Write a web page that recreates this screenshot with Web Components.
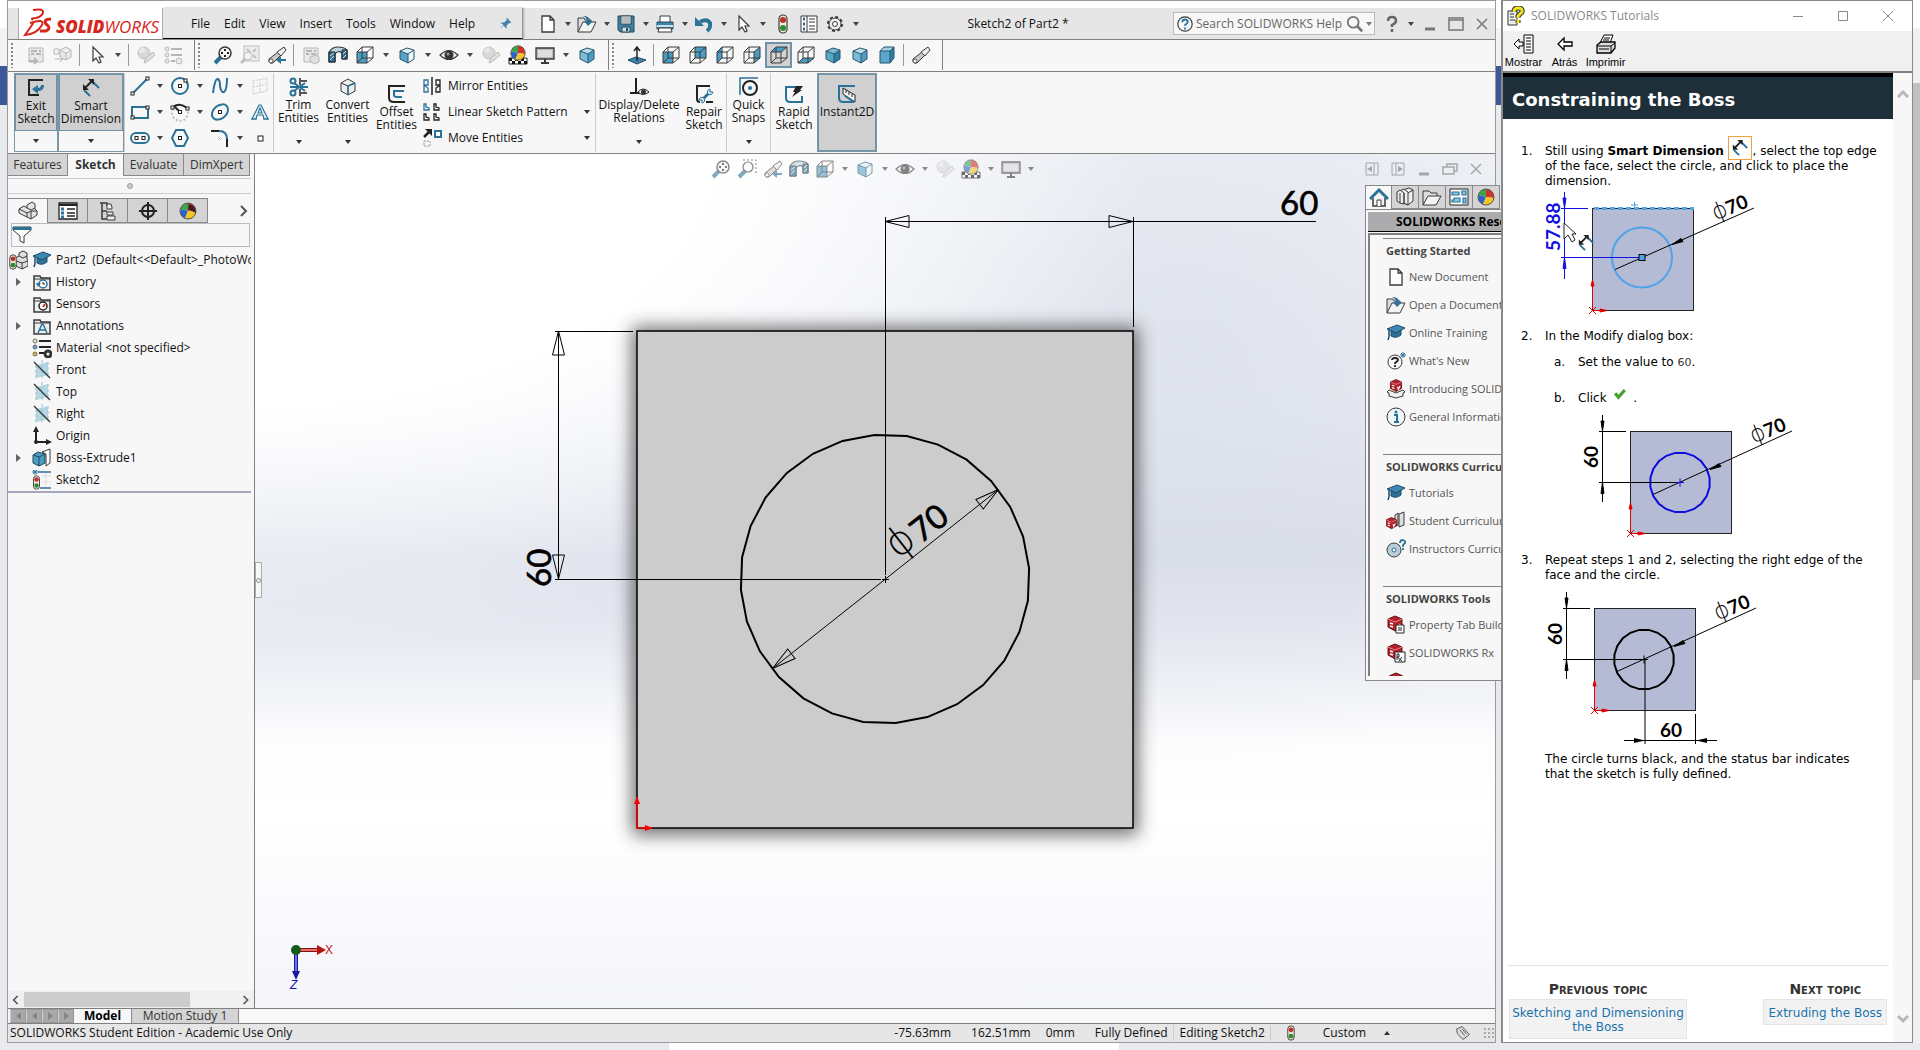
<!DOCTYPE html>
<html lang="en">
<head>
<meta charset="UTF-8">
<title>Sketch2 of Part2 *</title>
<style>
  html, body { height: 100%; }
  body {
    margin: 0;
    overflow: hidden;
    font: 12px/16px "Open Sans", "Noto Sans", sans-serif;
    color: #111;
  }
</style>
</head>
<body>
<cad-desktop>
  <cad-window slot="app"></cad-window>
  <help-window slot="help"></help-window>
</cad-desktop>

<script>
// ---------- icons (20 x 20 grid) ----------
const K = '#3a3a3a';
const B = '#2b7299';

const wire = (faces) => `${faces}<path d="M2 7H12V18H2ZM7 2H18V13H7ZM2 7L7 2M12 7L18 2M12 18L18 13M2 18L7 13" fill="none" stroke="${K}"/>`;
const solid = (a, b, c) => `<path d="M3 6L10 3L17 5L11 9Z" fill="${a}"/><path d="M3 6L11 9V18L3 14Z" fill="${b}"/><path d="M11 9L17 5V14L11 18Z" fill="${c}"/><path d="M3 6L10 3L17 5V14L11 18L3 14ZM3 6L11 9V18M11 9L17 5" fill="none" stroke="#27546c"/>`;
const ball = `<circle cx="10" cy="10" r="8" fill="#fff"/><path d="M10 10V2A8 8 0 0 0 2.5 8Z" fill="#3aa648"/><path d="M10 10V2A8 8 0 0 1 17.5 8L18 11Z" fill="#d22f2f"/><path d="M10 10L2.5 8A8 8 0 0 0 7 17.5Z" fill="#2f62c8"/><path d="M10 10L7 17.5A8 8 0 0 0 18 11Z" fill="#f2c522"/><circle cx="10" cy="10" r="8" fill="none" stroke="#555"/>`;
const folder = `<path d="M2 18V4H8L9 6H18V18Z" fill="#eee" stroke="${K}" stroke-width="1.5"/><path d="M2 7H18" stroke="${K}"/>`;
const plane = `<path d="M4 5L16 2V15L4 18Z" fill="#b5d6e3"/><path d="M10 0V20M4 5V18M16 2V15" stroke="#9cbccb" stroke-dasharray="3 2"/><path d="M2 2L18 18" stroke="${K}" stroke-width="1.5"/>`;
const light = `<rect x="6" y="1" width="8" height="18" rx="4" fill="#f3ecdd" stroke="${K}" stroke-width="1.2"/><circle cx="10" cy="6" r="3" fill="#c0302b"/><circle cx="10" cy="14" r="3" fill="#2f8a36"/>`;
const cap = `<path d="M1 6L11 2L19 5L10 10Z" fill="#3d88b0" stroke="#1f4f6b"/><path d="M5 8V13Q10 16 15 12V7L10 10Z" fill="#2f7298" stroke="#1f4f6b"/><path d="M3 7V14L2 17" fill="none" stroke="#1f4f6b" stroke-width="1.5"/>`;
const smart = `<path d="M3 12L9 18M12 4L18 10" stroke="${B}" stroke-width="2"/><path d="M4 10L11 3" stroke="#222" stroke-width="2"/><path d="M2 12V6L8 12ZM13 1V7L7 1Z" fill="#222"/>`;
const swBox = `<path d="M3 5L10 2L17 5V13L10 17L3 13Z" fill="#b3202a" stroke="#5e1016"/><path d="M3 5L10 8L17 5" fill="none" stroke="#e8888d"/><path d="M5 9L8 10M5 12L8 13M12 11L13 14L15 10" stroke="#fff" stroke-width="1.5" fill="none"/>`;
const pencilBall = `<circle cx="8" cy="8" r="6" fill="#bbb" stroke="#888"/><path d="M3 8A6 6 0 0 1 8 2L9 7Z" fill="#ddd"/><path d="M8 18L10 13L17 7L19 10L12 16Z" fill="#ccc" stroke="#777"/>`;
const tube = `<path d="M2 14L11 7L14 10L6 18Q1 19 2 14Z" fill="#c9c7bf" stroke="${K}"/><path d="M10 7L17 2L19 5L14 11Z" fill="#eee" stroke="${K}"/><ellipse cx="4" cy="16" rx="2" ry="2" fill="#fff" stroke="#555"/>`;
const handle = `<path d="M9 11L2 18" stroke="${B}" stroke-width="4"/>`;
const docGrid = `<path d="M3 3H17V17H3Z" fill="#ddd" stroke="#777"/><path d="M5 6H11M5 9H8M13 6H15M10 9H15" stroke="#777" stroke-width="2"/>`;
const nodes = (pts) => pts.map(([x, y]) => `<rect x="${x - 1.5}" y="${y - 1.5}" width="3" height="3" fill="#fff" stroke="#222"/>`).join('');

const ICONS = {
  pin: `<path d="M12 2L18 8L15 9L12 12L12 16L8 12L3 17L8 11L4 8L9 8L12 5Z" fill="#3d85ad"/>`,
  newDoc: `<path d="M4 2H12L16 6V18H4ZM12 2V6H16" fill="#fff" stroke="${K}" stroke-width="1.3"/>`,
  open: `<path d="M1 18V4H7L8 6H14V9" fill="#ddd" stroke="${K}"/><path d="M1 18L6 8H19L14 18Z" fill="#f3f3f3" stroke="${K}"/><path d="M6 2Q13 2 13 7H16L11 12L7 7H10Q10 4 6 2Z" fill="${B}"/>`,
  save: `<path d="M2 2H18V18H4L2 16Z" fill="#3f81a5" stroke="#24485c"/><path d="M5 2H15V10H5Z" fill="#fff" stroke="#24485c"/><path d="M6 4H14M6 6H14M6 8H14" stroke="#777"/><path d="M6 13H14V18H6Z" fill="#cfdde5" stroke="#24485c"/><path d="M11 14V17" stroke="#24485c" stroke-width="2"/>`,
  print: `<path d="M5 8V2H15V8" fill="#fff" stroke="${K}"/><path d="M2 8H18V15H2Z" fill="#3d85ad" stroke="#24485c"/><path d="M2 12H18" stroke="#cfe3ee" stroke-width="2"/><path d="M4 14H16L17 18H3Z" fill="#fff" stroke="${K}"/>`,
  undo: `<path d="M6 8Q13 4 16 9Q17 14 13 17" fill="none" stroke="${B}" stroke-width="4"/><path d="M1 3V12H10Z" fill="${B}"/>`,
  cursor: `<path d="M6 2V16L9 13L12 18L14 17L12 12H16Z" fill="#fff" stroke="${K}" stroke-width="1.2"/>`,
  light,
  options: `<path d="M2 2H18V18H2ZM8 2V18" fill="#fff" stroke="${K}"/><path d="M4 5H6M4 10H6M4 15H6" stroke="${B}" stroke-width="3"/><path d="M10 5H16M10 8H16M10 12H16M10 15H16" stroke="${K}"/>`,
  gear: `<circle cx="10" cy="10" r="7" fill="none" stroke="${K}" stroke-width="2" stroke-dasharray="3 2.5"/><circle cx="10" cy="10" r="6" fill="#eee" stroke="${K}"/><circle cx="10" cy="10" r="2.5" fill="#fff" stroke="${K}"/>`,
  grid1: `${docGrid}<path d="M3 16H11M8 13L11 16L8 19" stroke="#777" stroke-width="2" fill="none"/>`,
  grid2: `<path d="M7 5L13 2L18 5V12L13 15L7 12ZM7 5L13 8L18 5M13 8V15" fill="#ddd" stroke="#777"/><path d="M1 4H6V9H1ZM2 14H10M7 11L10 14L7 17" fill="#eee" stroke="#777"/>`,
  grid3: `${docGrid}<path d="M9 12L15 10L18 12V17L13 19L9 16Z" fill="#ccc" stroke="#777"/>`,
  appearance: pencilBall,
  list: `<g fill="#ddd" stroke="#777"><circle cx="4" cy="4" r="2"/><circle cx="4" cy="10" r="2"/><circle cx="4" cy="16" r="2"/><circle cx="16" cy="16" r="3"/></g><path d="M8 4H19M8 10H19M8 16H12" stroke="#777" stroke-width="2"/>`,
  zoomFit: `${handle}<circle cx="12" cy="8" r="6" fill="#f4f8fa" stroke="${K}" stroke-width="1.5"/><path d="M12 4V6M12 10V12M8 8H10M14 8H16" stroke="#222" stroke-width="2"/>`,
  zoomArea: `<path d="M6 1H19V14" fill="none" stroke="${K}" stroke-dasharray="2 2"/>${handle}<circle cx="11" cy="8" r="5" fill="#f4f8fa" stroke="${K}" stroke-width="1.2"/>`,
  fit: `<rect x="4" y="1" width="15" height="15" fill="#e6e6e6" stroke="#888"/><path d="M7 4L10 7M16 4L13 7M16 13L13 10" stroke="#888" stroke-width="2"/><circle cx="8" cy="11" r="4" fill="#eee" stroke="#888"/><path d="M5 14L1 18" stroke="#888" stroke-width="3"/>`,
  prevView: `${tube}<path d="M19 14H14V11L9 15L14 19V16H19Z" fill="${B}"/>`,
  section: `<path d="M1 7Q4 2 10 2Q16 2 19 5V14H14V8Q10 5 7 9V17H1Z" fill="#b9d3e0" stroke="${K}" stroke-width="1.2"/><path d="M1 7H7V17H1ZM14 5H19V14H14Z" fill="${B}" stroke="#222"/><path d="M2 11L6 8M2 15L6 11M15 9L18 6M15 13L18 10" stroke="#cfe6f2"/>`,
  orient: wire(`<path d="M2 7H12V18H2Z" fill="#4a9cc4"/><path d="M12 7L18 2V13L12 18Z" fill="#fff"/><path d="M2 7L7 2H18L12 7Z" fill="#fff"/>`),
  style: solid('#dff0f7', '#58a5c9', '#eef6fa'),
  box: solid('#b7dded', '#7dbcd9', '#4d9cc2'),
  box2: solid('#7fb9d3', '#5ea6c6', '#2f7ea5'),
  box3: `<path d="M3 6L7 2H17V13L13 18H3Z" fill="#2f7ea5"/><path d="M3 6H13V18H3Z" fill="#5aa7cb"/><path d="M3 6L7 2H17L13 6Z" fill="#a4d3e6"/><path d="M3 6L7 2H17V13L13 18H3ZM3 6H13V18M13 6L17 2" fill="none" stroke="#27546c"/>`,
  eye: `<path d="M1 10Q10 1 19 10Q10 19 1 10Z" fill="#eee" stroke="${K}" stroke-width="1.2"/><circle cx="10" cy="10" r="4.5" fill="#333"/><circle cx="9" cy="9" r="1.5" fill="#999"/>`,
  scene: `<path d="M1 13H19V19H1Z" fill="#fff" stroke="#222"/><path d="M1 13H4V16H1ZM7 13H10V16H7ZM13 13H16V16H13ZM4 16H7V19H4ZM10 16H13V19H10ZM16 16H19V19H16Z" fill="#111"/><g transform="translate(1 -1) scale(.9)">${ball}</g>`,
  monitor: `<path d="M1 3H19V14H1Z" fill="#bbb" stroke="${K}" stroke-width="1.3"/><path d="M3 5H17V12H3Z" fill="#ddd"/><path d="M10 14V18M6 18H14" stroke="${K}" stroke-width="2"/>`,
  normal: `<path d="M1 15L9 12L19 15L10 19Z" fill="#3d85ad" stroke="#24485c"/><path d="M10 16V3M7 6L10 2L13 6" fill="none" stroke="#222" stroke-width="1.5"/>`,
  front: wire('<path d="M2 7H12V18H2Z" fill="#4a9cc4"/>'),
  back: wire('<path d="M7 2H18V13H7Z" fill="#4a9cc4"/>'),
  left: wire('<path d="M2 7L7 2V13L2 18Z" fill="#4a9cc4"/>'),
  right: wire('<path d="M12 7L18 2V13L12 18Z" fill="#4a9cc4"/>'),
  top: wire('<path d="M2 7L7 2H18L12 7Z" fill="#4a9cc4"/>'),
  bottom: wire('<path d="M2 18L7 13H18L12 18Z" fill="#4a9cc4"/>'),
  tube,
  exitSketch: `<path d="M17 2H3V17H13" fill="none" stroke="#222" stroke-width="2"/><path d="M18 7Q18 13 12 13V16L6 11L12 7V10Q15 10 15 7Z" fill="${B}"/>`,
  smart,
  line: `<path d="M3 17L17 3" stroke="${B}" stroke-width="2"/>${nodes([[2.5, 17.5], [17.5, 2.5]])}`,
  circle: `<circle cx="10" cy="10" r="8" fill="none" stroke="${B}" stroke-width="2"/>${nodes([[10, 10], [15.5, 4.5]])}`,
  spline: `<path d="M3 17Q5 2 8 3Q10 4 10 10Q11 17 14 16Q17 14 17 2" fill="none" stroke="${B}" stroke-width="2"/>`,
  plane3d: `<path d="M3 5L17 2V15L3 18ZM10 3V17M3 11L17 8" fill="none" stroke="#aaa" stroke-dasharray="2 1"/>`,
  rect: `<path d="M2 5H18V16H2Z" fill="none" stroke="${B}" stroke-width="2"/>${nodes([[2.5, 15.5], [17.5, 5.5]])}`,
  arc: `<path d="M3 7A8 8 0 1 0 17 7" fill="none" stroke="#bbb" stroke-width="2" stroke-dasharray="2 2"/><path d="M3 5Q10 0 17 6M5 5L10 10" fill="none" stroke="#222" stroke-width="2"/>${nodes([[2.5, 5.5], [17.5, 6.5], [10, 10]])}`,
  ellipse: `<ellipse cx="10" cy="10" rx="9" ry="6.5" fill="none" stroke="${B}" stroke-width="2" transform="rotate(-40 10 10)"/>${nodes([[10, 10]])}`,
  letter: `<path d="M2 17L9 3H11L18 17H14L13 13H7L6 17ZM8 11H12L10 6Z" fill="#eaf4f9" stroke="${B}" stroke-width="1.2"/><path d="M1 17H7M13 17H19" stroke="${B}"/>`,
  slot: `<rect x="1" y="5" width="18" height="10" rx="5" fill="none" stroke="${B}" stroke-width="2"/>${nodes([[6.5, 10], [13.5, 10]])}`,
  polygon: `<path d="M6 2H14L18 10L14 18H6L2 10Z" fill="none" stroke="${B}" stroke-width="2"/>${nodes([[10, 10]])}`,
  fillet: `<path d="M1 3H9" stroke="#222" stroke-width="2"/><path d="M9 3Q17 3 17 11" fill="none" stroke="${B}" stroke-width="2"/><path d="M17 11V19" stroke="#222" stroke-width="2"/><path d="M8 9L11 12M11 9L8 12" stroke="#bbb"/>`,
  point: `<rect x="8" y="8" width="5" height="5" fill="#fff" stroke="#222"/>`,
  trim: `<path d="M11 1V8M11 12V19M12 4H18M12 16H18" stroke="#222" stroke-width="1.5"/><circle cx="4" cy="4" r="2.5" fill="none" stroke="${B}" stroke-width="2"/><circle cx="4" cy="16" r="2.5" fill="none" stroke="${B}" stroke-width="2"/><path d="M5 6L16 14M5 14L16 6M1 10H19" stroke="${B}" stroke-width="2"/>`,
  convert: `<path d="M3 6L10 2L17 6V14L10 18L3 14Z" fill="#eee" stroke="${K}"/><path d="M3 6L10 9L17 6M10 9V18" fill="none" stroke="${K}"/><path d="M10 18V9L17 6" fill="none" stroke="${B}" stroke-width="1.5"/>`,
  offset: `<path d="M18 2H2V14Q2 18 7 18H18" fill="none" stroke="#222" stroke-width="2"/><path d="M17 7H7V11Q7 13 10 13H15" fill="none" stroke="${B}" stroke-width="2"/>`,
  mirror: `<path d="M10 1V19" stroke="#222" stroke-width="1.5"/><path d="M2 4V16H6V12L3 10V9H6V4Z" fill="none" stroke="${B}" stroke-width="1.3"/><path d="M18 4V16H14V12L17 10V9H14V4Z" fill="none" stroke="#222" stroke-width="1.3"/>`,
  pattern: `<path d="M2 2V8H7V6L4 5V2Z" fill="none" stroke="${B}" stroke-width="1.3"/><g fill="none" stroke="#222" stroke-width="1.3"><path d="M12 2V8H17V6L14 5V2Z"/><path d="M2 12V18H7V16L4 15V12Z"/><path d="M12 12V18H17V16L14 15V12Z"/></g>`,
  move: `<path d="M2 9L8 3" stroke="#222" stroke-width="2.5"/><path d="M3 1H10V8Z" fill="#222"/><path d="M13 3H19V9H13Z" fill="#fff" stroke="${B}" stroke-width="2"/><path d="M2 13H8V18H2Z" fill="none" stroke="#999" stroke-dasharray="2 1"/>`,
  relations: `<path d="M7 1V15M1 16H11" stroke="#222" stroke-width="2"/><path d="M9 15Q14 9 20 15Q14 20 9 15Z" fill="#eee" stroke="#222"/><circle cx="14.5" cy="15" r="2.5" fill="#333"/>`,
  repair: `<path d="M16 2H3V15Q3 18 6 18" fill="none" stroke="#222" stroke-width="2"/><path d="M12 18H19" stroke="#222" stroke-width="2"/><path d="M8 16L16 8" stroke="${B}" stroke-width="3"/><path d="M14 10Q12 6 16 5V8H19Q18 12 14 10ZM10 14Q12 18 8 19V16H5Q6 12 10 14Z" fill="#dcecf4" stroke="${B}"/>`,
  snaps: `<path d="M1 18V1H19" fill="none" stroke="${B}" stroke-width="1.5"/><circle cx="11" cy="11" r="7" fill="none" stroke="#222" stroke-width="2"/><circle cx="11" cy="11" r="2" fill="${B}"/>`,
  rapid: `<path d="M14 3H2V14Q2 18 6 18H18V12" fill="none" stroke="${B}" stroke-width="2"/><path d="M12 2H19L16 6H18L8 13L11 8H9Z" fill="#222"/>`,
  instant: `<path d="M18 2H2V14Q2 18 6 18H17" fill="none" stroke="${B}" stroke-width="2"/><path d="M6 4L18 11V18L6 10Z" fill="#f4f4f4" stroke="#222"/><path d="M9 6V9M12 8V11M15 10V13" stroke="#222"/><path d="M8 12L17 18" stroke="${B}" stroke-width="2"/>`,
  part: `<path d="M1 8L6 5L9 7V4L14 1L17 3V8L19 10V14L13 18L1 12Z" fill="#e3e3e3" stroke="${K}"/><path d="M1 8L9 12L13 10V14M9 7L13 9L17 7M9 12V16M13 10L19 10M13 14V18" fill="none" stroke="${K}"/>`,
  props: `<path d="M1 2H19V18H1Z" fill="#fff" stroke="#222" stroke-width="1.3"/><path d="M1 4H19" stroke="#222" stroke-width="2"/><path d="M3 8H6M3 12H6M3 16H6" stroke="${B}" stroke-width="3"/><path d="M9 8H17M9 12H17M9 15H17" stroke="#222" stroke-width="1.3"/>`,
  config: `<path d="M2 2H9V5M4 2V18H9M4 10H9" fill="none" stroke="${K}" stroke-width="1.5"/><path d="M9 3H13L14 6V8H9ZM9 11H15V14H9ZM9 15H17V19H9Z" fill="#eee" stroke="${K}"/>`,
  target: `<circle cx="10" cy="10" r="6" fill="none" stroke="#222" stroke-width="2"/><path d="M10 1V19M1 10H19" stroke="#222" stroke-width="2"/>`,
  ball: ball + `<path d="M11 3Q17 4 18 12L10 8Z" fill="#3a2020"/>`,
  sphere: ball,
  filter: `<path d="M1 2H19V5L12 11V18L8 16V11L1 5Z" fill="#fff" stroke="${K}"/><path d="M1 2H19V5H1Z" fill="${B}"/>`,
  chevron: `<path d="M7 5L12 10L7 15" fill="none" stroke="#555" stroke-width="2"/>`,
  chevronLeft: `<path d="M12 5L7 10L12 15" fill="none" stroke="#555" stroke-width="2"/>`,
  chevronUp: `<path d="M5 13L10 8L15 13" fill="none" stroke="#b8b8b8" stroke-width="3"/>`,
  chevronDown: `<path d="M5 7L10 12L15 7" fill="none" stroke="#b8b8b8" stroke-width="3"/>`,
  rootPart: `<path d="M7 8L11 6V3L15 1L19 3V9L20 11V16L14 19L8 16Z" fill="#ddd" stroke="${K}"/><path d="M11 6L15 8L19 6M8 11L14 13L20 11M14 13V19" fill="none" stroke="${K}"/><g transform="translate(-3 4) scale(.8)">${light}</g>`,
  cap,
  history: `${folder}<circle cx="11" cy="12" r="4" fill="#fff" stroke="${B}" stroke-width="1.5"/><path d="M11 10V12H13" fill="none" stroke="#222"/><path d="M4 11H9L6 15Z" fill="${B}"/>`,
  sensors: `${folder}<circle cx="11" cy="12" r="4" fill="#fff" stroke="#222" stroke-width="1.5"/><path d="M11 13L13 10" stroke="#c33" stroke-width="2"/>`,
  annotations: `${folder}<path d="M6 17L10 8H11L15 17M8 14H13" fill="none" stroke="${B}" stroke-width="1.5"/>`,
  material: `<path d="M7 3H19M7 9H19M7 15H12" stroke="#222" stroke-width="2"/><g stroke="#666"><circle cx="3" cy="3" r="2" fill="#f6efc8"/><circle cx="3" cy="9" r="2" fill="#6aa5e8"/><circle cx="3" cy="16" r="2" fill="#f0b93a"/></g><circle cx="16" cy="16" r="3" fill="none" stroke="#333" stroke-width="3"/>`,
  plane,
  origin: `<path d="M4 4V16H16" fill="none" stroke="#222" stroke-width="2"/><path d="M1 6L4 0L7 6ZM14 13L20 16L14 19Z" fill="#222"/><circle cx="4" cy="16" r="2" fill="#222"/>`,
  extrude: `<path d="M10 4L18 1V15L14 18V6Z" fill="#fff" stroke="${K}"/><path d="M1 7L6 4L13 6V15L7 18L1 15Z" fill="#4a9cc4" stroke="#24485c"/><path d="M1 7L7 9L13 6M7 9V18" fill="none" stroke="#24485c"/>`,
  sketch: `<path d="M6 2H19M8 18H19" stroke="${B}" stroke-width="1.5"/><path d="M10 6H19M10 12H19M14 3V17" stroke="#ddd"/><path d="M0 2H6M3 0V5M1 0L5 4M5 0L1 4" stroke="${B}"/><g transform="translate(-3 5) scale(.75)">${light}</g>`,
  search: `<circle cx="8" cy="8" r="6" fill="none" stroke="#777" stroke-width="2"/><path d="M12 12L18 18" stroke="#777" stroke-width="3"/>`,
  helpRound: `<circle cx="10" cy="10" r="8" fill="#f3f8fa" stroke="${K}" stroke-width="1.3"/><path d="M7 8Q7 5 10 5Q13 5 13 8Q13 9 10 11V12M10 14V16" fill="none" stroke="${B}" stroke-width="2"/>`,
  question: `<path d="M6 7Q6 3 10 3Q14 3 14 7Q14 9 10 11V13M10 15V18" fill="none" stroke="#666" stroke-width="2.5"/>`,
  min: `<path d="M5 15H15" stroke="#777" stroke-width="3"/>`,
  max: `<path d="M3 4H17V16H3ZM3 6H17" fill="none" stroke="#777" stroke-width="1.5"/>`,
  close: `<path d="M5 5L15 15M15 5L5 15" stroke="#777" stroke-width="1.5"/>`,
  restore: `<path d="M7 8V5H17V12H14M3 8H14V15H3Z" fill="none" stroke="#777" stroke-width="1.5"/>`,
  dockLeft: `<path d="M4 4H16V16H4ZM12 4V16" fill="none" stroke="#777"/><path d="M10 7V13L5 10Z" fill="#777"/>`,
  dockRight: `<path d="M4 4H16V16H4ZM8 4V16" fill="none" stroke="#777"/><path d="M10 7V13L15 10Z" fill="#777"/>`,
  thinMin: `<path d="M5 10.5H15" stroke="#888"/>`,
  thinMax: `<path d="M5.5 5.5H14.5V14.5H5.5Z" fill="none" stroke="#888"/>`,
  thinClose: `<path d="M5 5L15 15M15 5L5 15" stroke="#888"/>`,
  home: `<path d="M4 10V18H16V10" fill="#f2f2f2" stroke="${K}" stroke-width="1.5"/><path d="M8 18V12H12V18" fill="#fff" stroke="${K}"/><path d="M1 11L10 2L19 11" fill="none" stroke="${B}" stroke-width="3"/>`,
  books: `<g fill="#eee" stroke="${K}"><path d="M8 3L14 1L18 3V14L13 18L9 16Z"/><path d="M5 4L9 2L13 5V18L9 16L5 15Z"/><path d="M2 5L5 3L9 6V17L5 16L2 14Z"/></g><path d="M5 6V16M9 6V17M13 6L18 3" stroke="${K}"/>`,
  folder: `<path d="M1 18V4H7L9 6H15V9" fill="#ddd" stroke="${K}"/><path d="M1 18L6 9H19L14 18Z" fill="#f3f3f3" stroke="${K}"/>`,
  palette: `<path d="M1 2H19V18H1Z" fill="#fff" stroke="#222"/><path d="M3 5H10V8H3ZM13 4H17V8H13ZM5 11H11V15H3V13H5ZM14 11H17V16H14Z" fill="#8cc4de" stroke="${B}" stroke-width="1.2"/>`,
  whatsNew: `<circle cx="9" cy="11" r="7" fill="#f8f8f8" stroke="${K}"/><path d="M6 9Q6 7 9 7Q12 7 12 9Q12 10 9 12V13M9 14V16" fill="none" stroke="#222" stroke-width="1.8"/><path d="M14 4H20M17 1V7M15 2L19 6M19 2L15 6" stroke="${B}"/>`,
  introBox: `<g transform="translate(2 -1) scale(.8)">${swBox}</g><path d="M3 11L10 14L17 11L19 13L17 14V17L10 19L3 17V14L1 13Z" fill="#eee" stroke="${K}"/>`,
  info: `<circle cx="10" cy="10" r="9" fill="#eef6fa" stroke="${K}"/><path d="M8 8H11V15M8 15H13" fill="none" stroke="${B}" stroke-width="2"/><circle cx="10" cy="5" r="1.5" fill="${B}"/>`,
  student: `<path d="M9 4L12 2V14L9 15ZM13 3L18 1V14L13 16Z" fill="#ddd" stroke="${K}"/><g transform="translate(-2 5) scale(.75)">${swBox}</g>`,
  instructor: `<circle cx="8" cy="11" r="7" fill="#b8cdd8" stroke="${K}"/><circle cx="8" cy="11" r="2" fill="#fff" stroke="${B}"/><path d="M14 4Q14 1 17 1Q20 2 19 4L17 6V8M17 9V11" fill="none" stroke="${B}" stroke-width="1.8"/>`,
  swTab: `<g transform="translate(-1 -1)">${swBox}</g><path d="M10 10H18V18H10Z" fill="#fff" stroke="#222"/><path d="M12 13H16M12 15H16" stroke="#222"/>`,
  swRx: `<g transform="translate(-1 -1)">${swBox}</g><path d="M9 9H19V19H9Z" fill="#fff" stroke="#222"/><path d="M11 17V11H13V14H11L16 18M16 14L13 18" fill="none" stroke="#222"/>`,
  swBox,
  tag: `<path d="M2 5L9 2L18 12L10 18L3 11Z" fill="#ddd" stroke="${K}"/><path d="M6 6L12 13M9 5L14 11" stroke="${K}"/>`,
  bookHelp: `<path d="M2 5H11V19H2Z" fill="#eee" stroke="#333"/><path d="M4 8H8M4 11H8M4 14H9" stroke="#333"/><path d="M8 6Q8 2 12 2Q17 2 16 6L12 10V12M12 14V17" fill="none" stroke="#333" stroke-width="5"/><path d="M8 6Q8 2 12 2Q17 2 16 6L12 10V12M12 14V17" fill="none" stroke="#f0e020" stroke-width="3"/>`,
  show: `<path d="M10 1H19V19H10Z" fill="#fff" stroke="#000"/><path d="M12 4H17M12 7H17M12 10H17M12 13H17M12 16H17" stroke="#000"/><path d="M9 8H5V5L0 10L5 15V12H9Z" fill="#fff" stroke="#000"/>`,
  back2: `<path d="M17 8H9V4L3 10L9 16V12H17Z" fill="#fff" stroke="#000" stroke-width="1.3"/>`,
  printer: `<path d="M4 9L8 1H17L14 9" fill="#fff" stroke="#000"/><path d="M8 4H14M7 6H13" stroke="#000"/><path d="M1 11L5 8H19V14L15 19H1Z" fill="#ddd" stroke="#000" stroke-width="1.3"/><path d="M1 12H15V18M15 12L19 9M3 15H13" stroke="#000" fill="none"/>`,
  check: `<path d="M4 9L8 14L16 5" fill="none" stroke="#4aa02c" stroke-width="4"/>`
};

class CadIcon extends HTMLElement {
  constructor() {
    super();
    this.attachShadow({ mode: 'open' });
  }

  connectedCallback() {
    this.shadowRoot.innerHTML = `
      <style>
        :host { display: inline-flex; width: 20px; height: 20px; flex: none; }
        svg { width: 100%; height: 100%; }
      </style>
      <svg viewBox="0 0 20 20" aria-hidden="true">${ICONS[this.getAttribute('name')] || ''}</svg>
    `;
  }
}
customElements.define('cad-icon', CadIcon);

// items: "name" a button, "name+" a button with a drop-down, "name!" selected,
// "name-" disabled, "|" a separator
class ToolStrip extends HTMLElement {
  constructor() {
    super();
    this.attachShadow({ mode: 'open' });
  }

  connectedCallback() {
    const items = this.getAttribute('items').split(' ').map(item => {
      if (item === '|') return '<span class="sep"></span>';
      const name = item.replace(/[+!-]/g, '');
      const cls = item.includes('!') ? 'on' : item.includes('-') ? 'off' : '';
      return `<button class="${cls}" aria-label="${name}"><cad-icon name="${name}"></cad-icon></button>` +
        (item.includes('+') ? `<button class="drop" aria-label="${name} menu"><i></i></button>` : '');
    }).join('');

    this.shadowRoot.innerHTML = `
      <style>
        :host { display: flex; align-items: center; }
        .grip { display: none; width: 14px; height: 26px; }
        :host([grip]) { padding-right: 8px; border-right: 1px solid #808080; }
        :host([grip]) .grip { display: block; background: radial-gradient(circle, #888 1px, transparent 1px) 2px 0 / 4px 4px repeat-y; }
        :host([faded]) { opacity: .6; }
        button { display: flex; align-items: center; justify-content: center; box-sizing: border-box; width: var(--cell, 27px); height: 26px; padding: 0; border: 0; background: none; }
        .on { background: #d2d2d2; border: 2px solid #6d93a9; }
        .off { opacity: .5; }
        .drop { width: var(--drop, 15px); }
        .drop i { border: 3px solid transparent; border-top: 4px solid #444; border-bottom: 0; }
        .sep { width: 7px; height: 22px; background: linear-gradient(#999, #999) center / 1px 100% no-repeat; }
      </style>
      <span class="grip"></span>${items}
    `;
  }
}
customElements.define('tool-strip', ToolStrip);

class TitleBar extends HTMLElement {
  constructor() {
    super();
    this.attachShadow({ mode: 'open' });
    const menus = ['File', 'Edit', 'View', 'Insert', 'Tools', 'Window', 'Help'];
    this.shadowRoot.innerHTML = `
      <style>
        :host { display: flex; height: 31px; background: #e6e6e6; border-bottom: 1px solid #808080; align-items: center; }
        .logo { box-sizing: border-box; width: 145px; height: 31px; margin-left: 10px; background: #fff; border: 1px solid #aaa; border-width: 0 1px; flex: none; }
        nav { display: flex; align-items: center; align-self: stretch; gap: 14px; padding: 1px 9px 0 28px; border-right: 1px solid #999; border-bottom: 1px solid #000; box-shadow: 1px 0 2px #aaa; }
        nav a { color: inherit; text-decoration: none; }
        nav cad-icon { margin-left: 8px; width: 16px; }
        .main { --cell: 24px; margin-left: 13px; }
        .more { --cell: 26px; }
        h1 { flex: 1; margin: 0; padding-top: 1px; font: inherit; text-align: center; white-space: nowrap; }
        form { display: flex; align-items: center; box-sizing: border-box; width: 202px; height: 23px; padding: 0 2px; gap: 2px; border: 1px solid #bbb; background: #f7f7f7; flex: none; }
        input { flex: 1; min-width: 0; border: 0; padding: 0; background: none; font: inherit; }
        input::placeholder { color: #666; opacity: 1; }
        form cad-icon { width: 18px; height: 18px; }
        form i { border: 3px solid transparent; border-top: 4px solid #777; border-bottom: 0; }
        .win { --cell: 26px; --drop: 12px; margin: 0 0 0 4px; }
      </style>
      <div class="logo">
        <svg width="143" height="31" role="img" aria-label="SOLIDWORKS">
          <g fill="none" stroke="#d8261c" stroke-width="2">
            <path d="M14 2Q25 0 24 5Q22 9 17 10Q11 10 14 12"/>
            <path d="M11 15Q26 10 23 17Q18 26 6 27Q11 20 15 14"/>
            <path d="M32 11Q24 11 27 16Q33 20 27 23L21 23" stroke-width="3"/>
          </g>
          <text x="37" y="25" font-family="Open Sans, sans-serif" font-size="17" font-style="italic" fill="#d8261c"><tspan font-weight="800">SOLID</tspan><tspan>WORKS</tspan></text>
        </svg>
      </div>
      <nav>${menus.map(m => `<a href="#">${m}</a>`).join('')}<cad-icon name="pin"></cad-icon></nav>
      <tool-strip class="main" items="newDoc+ open+ save+ print+ undo+ cursor+"></tool-strip>
      <tool-strip class="more" items="light options gear+"></tool-strip>
      <h1>Sketch2 of Part2 *</h1>
      <form>
        <cad-icon name="helpRound"></cad-icon>
        <input type="text" aria-label="Search" placeholder="Search SOLIDWORKS Help">
        <cad-icon name="search"></cad-icon><i></i>
      </form>
      <tool-strip class="win" items="question+ min max close"></tool-strip>
    `;
  }
}
customElements.define('title-bar', TitleBar);

class RibbonButton extends HTMLElement {
  constructor() {
    super();
    this.attachShadow({ mode: 'open' });
  }

  connectedCallback() {
    this.shadowRoot.innerHTML = `
      <style>
        :host { display: flex; flex-direction: column; box-sizing: border-box; height: 79px; width: var(--w, 49px); flex: none; }
        button { font: inherit; color: inherit; line-height: 13px; display: flex; flex-direction: column; align-items: center; gap: 1px; border: 0; padding: 4px 0 0; background: none; white-space: pre; box-sizing: border-box; }
        .main { flex: 1; }
        .drop { height: 20px; justify-content: center; padding: 0; display: none; }
        .drop i { border: 3px solid transparent; border-top: 4px solid #333; border-bottom: 0; }
        :host([drop]) .drop { display: flex; }
        :host([low]) .main { padding-top: 11px; }
        :host([on]) { border: 1px solid #7d96a5; }
        :host([on]) .main { background: #d0d0d0; border: 1px solid #6d93a9; padding-top: 3px; }
        :host([on][low]) .main { padding-top: 9px; }
      </style>
      <button class="main"><cad-icon name="${this.getAttribute('icon')}"></cad-icon><span><slot></slot></span></button>
      <button class="drop" aria-label="More"><i></i></button>
    `;
  }
}
customElements.define('ribbon-button', RibbonButton);

class RibbonBar extends HTMLElement {
  constructor() {
    super();
    this.attachShadow({ mode: 'open' });
    const tools = ['line+', 'circle+', 'spline+', 'plane3d', 'rect+', 'arc+', 'ellipse+', 'letter', 'slot+', 'polygon', 'fillet+', 'point'];
    this.shadowRoot.innerHTML = `
      <style>
        :host { display: flex; height: 82px; box-sizing: border-box; padding: 1px 0 1px 6px; background: #f7f7f7; border-bottom: 1px solid #808080; }
        .tools { display: grid; grid-template-columns: repeat(3, 40px) 25px; grid-auto-rows: 26px; padding: 0 1px 0 2px; border: 1px solid #ccc; border-width: 0 1px; }
        .tools tool-strip { --cell: 25px; }
        .tools tool-strip[items="plane3d"] { opacity: .6; }
        .list { width: 175px; box-sizing: border-box; display: grid; grid-auto-rows: 26px; border-right: 1px solid #ccc; }
        .list button { display: flex; align-items: center; gap: 6px; border: 0; padding: 0 5px 0 1px; background: none; font: inherit; color: inherit; white-space: nowrap; }
        .list i { margin-left: auto; border: 3px solid transparent; border-top: 4px solid #333; border-bottom: 0; }
        .sep { width: 1px; background: #ccc; }
      </style>
      <ribbon-button icon="exitSketch" on drop style="--w:44px">Exit
Sketch</ribbon-button>
      <ribbon-button icon="smart" on drop style="--w:66px">Smart
Dimension</ribbon-button>
      <div class="tools">${tools.map(t => `<tool-strip items="${t}"></tool-strip>`).join('')}</div>
      <ribbon-button icon="trim" drop><u>T</u>rim
Entities</ribbon-button>
      <ribbon-button icon="convert" drop>Convert
Entities</ribbon-button>
      <ribbon-button icon="offset" low>Offset
Entities</ribbon-button>
      <div class="list">
        <button><cad-icon name="mirror"></cad-icon>Mirror Entities</button>
        <button><cad-icon name="pattern"></cad-icon>Linear Sketch Pattern<i></i></button>
        <button><cad-icon name="move"></cad-icon>Move Entities<i></i></button>
      </div>
      <ribbon-button icon="relations" drop style="--w:86px">Display/Delete
Relations</ribbon-button>
      <ribbon-button icon="repair" low style="--w:44px">Repair
Sketch</ribbon-button>
      <span class="sep"></span>
      <ribbon-button icon="snaps" drop style="--w:43px">Quick
Snaps</ribbon-button>
      <span class="sep"></span>
      <ribbon-button icon="rapid" low style="--w:46px">Rapid
Sketch</ribbon-button>
      <ribbon-button icon="instant" low on style="--w:60px">Instant2D</ribbon-button>
    `;
  }
}
customElements.define('ribbon-bar', RibbonBar);

class FeaturePanel extends HTMLElement {
  constructor() {
    super();
    this.attachShadow({ mode: 'open' });
    const rows = [
      ['history', 'History', true],
      ['sensors', 'Sensors'],
      ['annotations', 'Annotations', true],
      ['material', 'Material &lt;not specified&gt;'],
      ['plane', 'Front'],
      ['plane', 'Top'],
      ['plane', 'Right'],
      ['origin', 'Origin'],
      ['extrude', 'Boss-Extrude1', true],
      ['sketch', 'Sketch2']
    ];
    this.shadowRoot.innerHTML = `
      <style>
        :host { display: flex; flex-direction: column; width: 246px; flex: none; background: #f7f7f7; border-right: 1px solid #808080; position: relative; }
        button { font: inherit; color: #333; padding: 0; }
        .commands { display: grid; grid-template-columns: 60px 56px 60px 66px; height: 22px; }
        .commands button { border: 1px solid #888; border-width: 0 1px 1px 0; background: #d4d4d4; }
        .commands button.on { font-weight: bold; background: #f7f7f7; border-bottom: 0; }
        .handle { display: flex; justify-content: center; align-items: center; height: 14px; margin: 2px 3px 0 0; border: 1px solid #ccc; border-width: 1px 0; }
        .handle i { width: 4px; height: 4px; border: 1px solid #999; border-radius: 50%; background: #ccc; }
        .views { display: flex; height: 25px; margin-top: 4px; align-items: center; }
        .views button { width: 40px; height: 25px; box-sizing: border-box; border: 1px solid #888; border-left: 0; background: #d4d4d4; display: flex; align-items: center; justify-content: center; }
        .views button.on { background: #f7f7f7; border-bottom: 0; }
        .views > cad-icon { margin-left: auto; }
        label { display: flex; align-items: center; gap: 4px; margin: 0 4px 0 3px; height: 22px; border: 1px solid #bbb; }
        input { flex: 1; border: 0; background: none; min-width: 0; }
        ul { list-style: none; margin: 2px 3px 0 0; padding: 0; border-bottom: 2px solid #a6a6bc; overflow: hidden; }
        li { display: flex; align-items: center; height: 22px; white-space: pre; }
        li cad-icon { margin-right: 4px; }
        li .twist { width: 24px; flex: none; display: flex; justify-content: center; box-sizing: border-box; padding-right: 4px; }
        .twist.open::before { content: ""; border: 4px solid transparent; border-left: 5px solid #666; border-right: 0; }
        .scroll { margin-top: auto; height: 17px; display: flex; align-items: center; background: #f0f0f0; }
        .scroll i { width: 166px; height: 15px; margin-right: auto; background: #cdcdcd; }
        .scroll cad-icon { width: 16px; height: 16px; }
        .tab { position: absolute; right: -8px; top: 408px; width: 7px; height: 36px; box-sizing: border-box; border: 1px solid #aaa; background: #f7f7f7; display: flex; align-items: center; justify-content: center; z-index: 1; }
        .tab i { width: 3px; height: 3px; border-radius: 50%; border: 1px solid #888; }
      </style>
      <div class="commands"><button>Features</button><button class="on">Sketch</button><button>Evaluate</button><button>DimXpert</button></div>
      <div class="handle"><i></i></div>
      <div class="views">
        ${['part', 'props', 'config', 'target', 'ball'].map((n, i) => `<button class="${i ? '' : 'on'}" aria-label="${n}"><cad-icon name="${n}"></cad-icon></button>`).join('')}
        <cad-icon name="chevron"></cad-icon>
      </div>
      <label><cad-icon name="filter"></cad-icon><input type="text" aria-label="Filter"></label>
      <ul>
        <li><cad-icon name="rootPart"></cad-icon><cad-icon name="cap"></cad-icon>Part2  (Default&lt;&lt;Default&gt;_PhotoWor</li>
        ${rows.map(([icon, text, open]) => `<li><span class="twist ${open ? 'open' : ''}"></span><cad-icon name="${icon}"></cad-icon>${text}</li>`).join('')}
      </ul>
      <div class="scroll"><cad-icon name="chevronLeft"></cad-icon><i></i><cad-icon name="chevron"></cad-icon></div>
      <div class="tab"><i></i></div>
    `;
  }
}
customElements.define('feature-panel', FeaturePanel);

// sides of the faceted circle as the graphics card draws it
const facets = (cx, cy, r, n, start) => Array.from({ length: n }, (_, i) => {
  const a = (start + i * 360 / n) * Math.PI / 180;
  return `${(cx + r * Math.cos(a)).toFixed(1)},${(cy + r * Math.sin(a)).toFixed(1)}`;
}).join(' ');

class ModelView extends HTMLElement {
  constructor() {
    super();
    this.attachShadow({ mode: 'open' });
    const arrow = (x, y, deg) => `<path d="M0 0L24 -6V6Z" transform="translate(${x} ${y}) rotate(${deg})"/>`;
    this.shadowRoot.innerHTML = `
      <style>
        :host {
          display: block; position: relative; flex: 1; min-width: 0; overflow: visible;
          background:
            radial-gradient(ellipse 900px 500px at 0 0, #fff 50%, rgba(255,255,255,0) 100%),
            radial-gradient(ellipse 420px 420px at 930px 200px, rgba(212,218,230,.5), rgba(212,218,230,0) 100%),
            linear-gradient(#eff1f6 0, #e8ebf2 250px, #dadeea 400px, #e6e9f1 480px, #fdfdfe 590px, #fff 660px, #f4f5fa 100%);
        }
        svg { position: absolute; inset: 0; width: 100%; height: 100%; }
        header { position: relative; display: grid; grid-template-columns: 1fr auto 1fr; height: 30px; align-items: center; --cell: 26px; --drop: 14px; }
        header .win { grid-column: 3; justify-self: end; margin-right: 6px; }
        header .views { grid-column: 2; margin-right: 4px; }
        text { font-family: Lato, sans-serif; font-size: 33px; fill: #000; }
        .num { stroke: #000; stroke-width: .6px; }
        .sym { font-family: "DejaVu Sans", sans-serif; font-weight: 200; font-size: 40px; }
        .axis { font-family: "Liberation Sans", sans-serif; font-size: 12px; }
      </style>
      <svg>
        <defs><filter id="soft" x="-10%" y="-10%" width="120%" height="120%"><feGaussianBlur stdDeviation="9"/></filter></defs>
        <g transform="translate(-255 -154)">
          <rect x="632" y="327" width="506" height="508" fill="#333" opacity=".7" filter="url(#soft)"/>
          <rect x="637" y="331" width="496" height="497" fill="#ccc" stroke="#000" stroke-width="1.5"/>
          <polygon points="${facets(885, 579, 144.5, 28, -94.2)}" fill="none" stroke="#000" stroke-width="2"/>
          <g fill="none" stroke="#000">
            <path d="M885.5 217V575M1133.5 217V327M885 221.5H1316"/>
            <path d="M555 331.5H633M555 579.5H881M558.5 331V579"/>
            <path d="M772.5 668.5L998.5 489.5M882 579.5H889M885.5 576V583"/>
            ${arrow(885, 221.5, 0)}${arrow(1133, 221.5, 180)}
            ${arrow(558.5, 331, 90)}${arrow(558.5, 579, -90)}
            ${arrow(998.5, 489.5, 142)}${arrow(772.5, 668.5, -38)}
          </g>
          <text class="num" x="1280" y="215">60</text>
          <text class="num" transform="translate(551 587) rotate(-90)">60</text>
          <text class="sym" transform="translate(901 543) rotate(-38)" y="11" text-anchor="middle">ϕ</text>
          <text class="num" transform="translate(921 544) rotate(-38)">70</text>
          <g stroke="#f00" fill="#f00">
            <path d="M637 828V800M637 828H648" stroke-width="1.5"/>
            <path d="M634 804L637 796L640 804ZM645 825L653 828L645 831Z" stroke="none"/>
          </g>
          <path d="M300 950H318" stroke="#7a1717" stroke-width="4"/><path d="M300 950H318" stroke="#f26a5a" stroke-width="2"/>
          <path d="M317 945L326 950L317 955Z" fill="#b31313"/>
          <path d="M296 954V972" stroke="#1c1c8a" stroke-width="4"/><path d="M296 954V972" stroke="#7070f5" stroke-width="2"/>
          <path d="M292 971H300L296 980Z" fill="#1616a0"/>
          <circle cx="296" cy="950" r="5" fill="#145a1c"/>
          <text class="axis" x="325" y="954" style="fill:#c01616">X</text>
          <text class="axis" x="290" y="989" font-style="italic" style="fill:#1616c0">Z</text>
        </g>
      </svg>
      <header>
        <tool-strip class="views" faded items="zoomFit zoomArea prevView section orient+ style+ eye+ appearance- scene+ monitor+"></tool-strip>
        <tool-strip class="win" faded items="dockLeft dockRight min restore close"></tool-strip>
      </header>
    `;
  }
}
customElements.define('model-view', ModelView);

class TaskPane extends HTMLElement {
  constructor() {
    super();
    this.attachShadow({ mode: 'open' });
    const sections = [
      ['Getting Started', [['newDoc', 'New Document'], ['open', 'Open a Document'], ['cap', 'Online Training'], ['whatsNew', "What's New"], ['introBox', 'Introducing SOLIDWORKS'], ['info', 'General Information']]],
      ['SOLIDWORKS Curriculum', [['cap', 'Tutorials'], ['student', 'Student Curriculum'], ['instructor', 'Instructors Curriculum']]],
      ['SOLIDWORKS Tools', [['swTab', 'Property Tab Builder'], ['swRx', 'SOLIDWORKS Rx'], ['swBox', '']]]
    ];
    this.shadowRoot.innerHTML = `
      <style>
        :host { display: flex; flex-direction: column; box-sizing: border-box; overflow: hidden; height: 496px; }
        .tabs { display: flex; flex: none; height: 24px; }
        .tabs button { width: 27px; flex: none; box-sizing: border-box; padding: 0; border: 1px solid #888; border-left-width: 0; background: #d4d4d4; display: flex; align-items: center; justify-content: center; }
        .tabs button:first-child { border-left-width: 1px; border-bottom: 0; background: #f7f7f7; }
        .body { flex: 1; min-height: 0; display: flex; flex-direction: column; padding: 2px 0 4px 2px; background: #f7f7f7; border: 1px solid #888; border-right: 0; }
        h2 { flex: none; margin: 0; height: 19px; padding-left: 28px; font: bold 12px/19px "Open Sans", sans-serif; color: #000; background: #acacae; border-bottom: 1px solid #000; white-space: nowrap; }
        .box { flex: 1; min-height: 0; overflow: hidden; margin-top: 1px; padding: 3px 0 0 13px; border: 2px solid #808080; border-width: 2px 0 0 2px; font-size: 11px; color: #555; white-space: nowrap; }
        section { border-top: 1px solid #808080; margin-bottom: 23px; }
        h3 { margin: 0 0 0 3px; font: bold 11px/24px "Open Sans", sans-serif; color: #444; }
        a { display: flex; align-items: center; gap: 3px; height: 28px; padding-left: 3px; color: inherit; text-decoration: none; }
      </style>
      <div class="tabs">${['home', 'books', 'folder', 'palette', 'sphere'].map(n => `<button aria-label="${n}"><cad-icon name="${n}"></cad-icon></button>`).join('')}</div>
      <div class="body">
        <h2>SOLIDWORKS Resources</h2>
        <div class="box">
          ${sections.map(([title, links]) => `<section><h3>${title}</h3>${links.map(([icon, text]) => `<a href="#"><cad-icon name="${icon}"></cad-icon>${text}</a>`).join('')}</section>`).join('')}
        </div>
      </div>
    `;
  }
}
customElements.define('task-pane', TaskPane);

class StatusArea extends HTMLElement {
  constructor() {
    super();
    this.attachShadow({ mode: 'open' });
    this.shadowRoot.innerHTML = `
      <style>
        :host { display: block; border-top: 1px solid #808080; }
        .tabs { display: flex; height: 14px; background: #f7f7f7; border-bottom: 1px solid #808080; padding-left: 2px; }
        .nav { width: 16px; padding: 0; border: 1px solid #999; border-left-color: #ccc; background: #a9a9a9; display: flex; align-items: center; justify-content: center; box-sizing: border-box; }
        .nav::before { content: ""; border: 4px solid transparent; border-right: 5px solid #888; border-left: 0; }
        .nav.next::before { border-left: 5px solid #888; border-right: 0; }
        .tab { font: inherit; line-height: 12px; border: 0; padding: 0; background: #f7f7f7; width: 57px; font-weight: bold; }
        .tab.off { width: 108px; font-weight: normal; background: #d4d4d4; border: 1px solid #888; border-width: 0 1px; color: #333; }
        .status { display: flex; align-items: center; height: 18px; background: #e6e6e6; padding-left: 2px; white-space: nowrap; }
        .status > :first-child { flex: 1; }
        .status span { padding-right: 20px; }
        .status .y { padding-right: 15px; }
        .status .z { padding-right: 14px; }
        .status .cell { padding: 0 5px 0 6px; border-right: 1px solid #ccc; }
        .status cad-icon { height: 16px; margin: 0 12px; width: 16px; }
        .status .units { margin-left: 12px; padding-right: 18px; }
        .status i { border: 3px solid transparent; border-bottom: 4px solid #333; border-top: 0; margin-right: 53px; }
        .grip { width: 12px; height: 12px; background: radial-gradient(circle, #aaa 1px, transparent 1px) 0 0 / 4px 4px; }
      </style>
      <div class="tabs">
        <button class="nav" aria-label="First"></button><button class="nav" aria-label="Previous"></button><button class="nav next" aria-label="Next"></button><button class="nav next" aria-label="Last"></button>
        <button class="tab">Model</button><button class="tab off">Motion Study 1</button>
      </div>
      <div class="status">
        <span>SOLIDWORKS Student Edition - Academic Use Only</span>
        <span>-75.63mm</span><span class="y">162.51mm</span><span class="z">0mm</span>
        <span class="cell">Fully Defined</span><span class="cell">Editing Sketch2</span>
        <cad-icon name="light"></cad-icon>
        <span class="units">Custom</span><i></i>
        <cad-icon name="tag"></cad-icon><div class="grip"></div>
      </div>
    `;
  }
}
customElements.define('status-area', StatusArea);

class CadWindow extends HTMLElement {
  constructor() {
    super();
    this.attachShadow({ mode: 'open' });
    this.shadowRoot.innerHTML = `
      <style>
        :host { display: flex; flex-direction: column; box-sizing: border-box; height: 100%; padding-top: 7px; border: 1px solid #9a9a9f; background: #fff; position: relative; }
        .strips { display: flex; height: 30px; padding-bottom: 1px; background: #f7f7f7; border-bottom: 1px solid #808080; }
        .work { flex: 1; min-height: 0; display: flex; }
        task-pane { position: absolute; right: -7px; top: 184px; width: 137px; }
      </style>
      <title-bar></title-bar>
      <div class="strips">
        <tool-strip grip items="grid1- grid2- | cursor+ | appearance- list-"></tool-strip>
        <tool-strip grip items="zoomFit fit- prevView | grid3- section orient+ style+ eye+ appearance- scene monitor+ box"></tool-strip>
        <tool-strip grip items="normal | front back left right top! bottom box2 box box3 | tube"></tool-strip>
      </div>
      <ribbon-bar></ribbon-bar>
      <div class="work"><feature-panel></feature-panel><model-view></model-view></div>
      <status-area></status-area>
      <task-pane></task-pane>
    `;
  }
}
customElements.define('cad-window', CadWindow);

// Small dimensioned square used by the tutorial steps
class StepFigure extends HTMLElement {
  constructor() {
    super();
    this.attachShadow({ mode: 'open' });
  }

  connectedCallback() {
    const kind = this.getAttribute('kind');
    const first = kind === '1';
    const conf = {
      1: { x: 47, y: 19, h: 124, dim: '#1010e0', circle: '#4fa3e8' },
      2: { x: 52, y: 22, h: 130, dim: '#000', circle: '#0b0bdc' },
      3: { x: 49, y: 22, h: 163, dim: '#000', circle: '#000' }
    }[kind];
    const cy = first ? 49.5 : 51.5;
    const ring = first
      ? `<circle cx="50" cy="${cy}" r="30" fill="none" stroke="${conf.circle}" stroke-width="2"/>`
      : `<polygon points="${facets(50, cy, 30, 20, -81)}" fill="none" stroke="${conf.circle}" stroke-width="2"/>`;

    this.shadowRoot.innerHTML = `
      <style>
        :host { display: block; height: ${conf.h}px; }
        svg { width: 240px; height: 100%; display: block; overflow: visible; }
        text { font-family: Lato, sans-serif; font-size: 19px; font-weight: bold; }
        .sym { font-family: "DejaVu Sans", sans-serif; font-weight: 200; font-size: 23px; }
      </style>
      <svg>
        <g transform="translate(${conf.x} ${conf.y})">
          <rect x=".5" y=".5" width="101" height="102" fill="#b6bbd5" stroke="#222"/>
          ${first ? '<path d="M2 .5H102" stroke="#4fa3e8" stroke-width="3" stroke-dasharray="5 3"/><path d="M39 -3H46M42.5 -6V0" stroke="#4fa3e8"/>' : ''}
          ${ring}
          <g stroke="${conf.dim}" fill="${conf.dim}">
            <path d="M-27.5 -16V71M-31 .5H-4M-31 ${cy}H50" fill="none"/>
            <path d="M-29 -10H-26L-27.5 0ZM-29 ${cy + 11}H-26L-27.5 ${cy}Z"/>
          </g>
          <g stroke="#000"><path d="M23 ${cy + 12}L162 0"/><path d="M80 ${cy - 13}L89 ${cy - 19}L91 ${cy - 16}Z" fill="#000"/></g>
          ${first ? `<rect x="47" y="${cy - 3}" width="6" height="6" fill="#4fa3e8" stroke="#000"/>` : `<path d="M46 ${cy}H54M50 ${cy - 4}V${cy + 4}" stroke="${conf.circle}"/>`}
          <text transform="translate(-32 ${first ? 43 : 37}) rotate(-90)" fill="${conf.dim}">${first ? '57.88' : '60'}</text>
          <text class="sym" transform="translate(128 4) rotate(-22)" y="6" text-anchor="middle">ϕ</text>
          <text transform="translate(137 7) rotate(-22)">70</text>
          ${kind === '3' ? `
            <path d="M51 51V136M101.5 106V136M30 132.5H123" stroke="#000"/>
            <path d="M40 130V135L51 132.5ZM113 130V135L102 132.5Z"/>
            <text x="66" y="129">60</text>` : ''}
          ${first ? `
            <path d="M-28 15V31L-24 27L-20 34L-17 32L-20 26H-16Z" fill="#fff" stroke="#222"/>
            <g transform="translate(-15 26) scale(.9)">${smart}</g>` : ''}
          <g stroke="#e00000" fill="#e00000">
            <path d="M.5 101V74M0 102.5H10M-3 99L4 106M4 99L-3 106"/>
            <path d="M-1 78L.5 72L2 78ZM8 101L15 102.5L8 104Z"/>
          </g>
        </g>
      </svg>
    `;
  }
}
customElements.define('step-figure', StepFigure);

class HelpWindow extends HTMLElement {
  constructor() {
    super();
    this.attachShadow({ mode: 'open' });
    this.shadowRoot.innerHTML = `
      <style>
        :host { display: flex; flex-direction: column; box-sizing: border-box; height: 100%; border: 1px solid #8a8a8a; border-left-width: 2px; background: #fff; position: relative; }
        .title { display: flex; align-items: center; height: 30px; padding: 0 4px 0 3px; gap: 5px; color: #8a8a8a; flex: none; }
        .title span { flex: 1; }
        .title button { width: 40px; height: 28px; padding: 0; border: 0; background: none; display: flex; align-items: center; justify-content: center; }
        .bar { display: flex; height: 40px; background: #f0f0f0; border-bottom: 2px solid #808080; flex: none; }
        .bar button { display: flex; flex-direction: column; align-items: center; gap: 1px; min-width: 41px; padding: 3px 0 0; border: 0; background: none; font: 11px/14px "Liberation Sans", sans-serif; }
        .page { flex: 1; min-height: 0; display: flex; }
        .scroll { width: 19px; flex: none; background: #f7f7f7; display: flex; flex-direction: column; justify-content: space-between; padding: 11px 0 13px; box-sizing: border-box; align-items: center; }
        main { flex: 1; display: flex; flex-direction: column; font: 12px/15px "DejaVu Sans", sans-serif; color: #000; }
        h1 { margin: 0; height: 42px; padding-left: 9px; border-top: 4px solid #000; background: #1f2f3a; color: #fff; font: bold 18px/46px "DejaVu Sans", sans-serif; }
        ol { list-style: none; margin: 0; padding: 25px 4px 0 18px; flex: 1; }
        li { display: grid; grid-template-columns: 24px minmax(0, 1fr); }
        li + li { margin-top: 16px; }
        li + li + li { margin-top: 14px; }
        ol ol { padding: 11px 0 0 9px; flex: none; }
        ol ol li + li { margin-top: 21px; }
        .key { display: inline-flex; border: 1px solid #f0a040; width: 22px; height: 22px; align-items: center; justify-content: center; margin: -14px 1px -8px 0; vertical-align: -2px; }
        .key cad-icon { width: 18px; height: 18px; }
        .ok { width: 16px; height: 16px; margin: -6px 1px 0 2px; }
        p { margin: 0; }
        code { font: 11px "DejaVu Sans", sans-serif; color: #333; }
        .mid { margin: 3px 0 0; }
        .note { max-width: 328px; }
        footer { display: flex; justify-content: space-between; margin: 0 4px; padding: 15px 2px 0; border-top: 1px solid #e4e4e4; height: 61px; text-align: center; }
        footer h2 { margin: 0 0 1px; font: small-caps bold 14px/17px "DejaVu Sans", sans-serif; color: #333; }
        footer a { display: block; box-sizing: border-box; line-height: 14px; padding: 6px 4px 4px; color: #1a72ae; background: #f2f2f2; border: 1px solid #e4e4e4; text-decoration: none; }
        .prev { width: 178px; }
        .prev a { padding: 6px 0 4px; }
      </style>
      <div class="title">
        <cad-icon name="bookHelp"></cad-icon><span>SOLIDWORKS Tutorials</span>
        <button aria-label="Minimize"><cad-icon name="thinMin"></cad-icon></button>
        <button aria-label="Maximize"><cad-icon name="thinMax"></cad-icon></button>
        <button aria-label="Close"><cad-icon name="thinClose"></cad-icon></button>
      </div>
      <div class="bar">
        <button><cad-icon name="show"></cad-icon>Mostrar</button>
        <button><cad-icon name="back2"></cad-icon>Atrás</button>
        <button><cad-icon name="printer"></cad-icon>Imprimir</button>
      </div>
      <div class="page">
        <main>
          <h1>Constraining the Boss</h1>
          <ol>
            <li><span>1.</span><div>
              <p>Still using <b>Smart Dimension</b> <span class="key"><cad-icon name="smart"></cad-icon></span>, select the top edge of the face, select the circle, and click to place the dimension.</p>
              <step-figure kind="1"></step-figure>
            </div></li>
            <li><span>2.</span><div>
              <p>In the Modify dialog box:</p>
              <ol>
                <li><span>a.</span><p>Set the value to <code>60</code>.</p></li>
                <li><span>b.</span><div>
                  <p>Click <cad-icon class="ok" name="check"></cad-icon> .</p>
                  <step-figure class="mid" kind="2"></step-figure>
                </div></li>
              </ol>
            </div></li>
            <li><span>3.</span><div>
              <p>Repeat steps 1 and 2, selecting the right edge of the face and the circle.</p>
              <step-figure class="mid" kind="3"></step-figure>
              <p class="mid note">The circle turns black, and the status bar indicates that the sketch is fully defined.</p>
            </div></li>
          </ol>
          <footer>
            <div class="prev"><h2>Previous topic</h2><a href="#">Sketching and Dimensioning the Boss</a></div>
            <div class="next"><h2>Next topic</h2><a href="#">Extruding the Boss</a></div>
          </footer>
        </main>
        <div class="scroll"><cad-icon name="chevronUp"></cad-icon><cad-icon name="chevronDown"></cad-icon></div>
      </div>
    `;
  }
}
customElements.define('help-window', HelpWindow);

// Desktop: two windows side by side over a browser page that shows at the edges
class CadDesktop extends HTMLElement {
  constructor() {
    super();
    this.attachShadow({ mode: 'open' });
    this.shadowRoot.innerHTML = `
      <style>
        :host {
          display: grid; grid-template: minmax(0, 1fr) 7px / minmax(0, 1fr) 412px 7px;
          box-sizing: border-box; height: 100vh; padding-left: 7px;
          background: linear-gradient(#fff 28px, #f3f3f5 28px 66px, #3b5998 66px 105px, #e9eaed 105px);
        }
        .app { min-width: 0; margin-right: 5px; }
        .edge { background: linear-gradient(#fff 28px, #f1f1f1 28px 83px, #c1c1c1 83px 680px, #f1f1f1 680px); }
        .card { grid-column: 1 / -1; margin-left: 662px; width: 450px; background: #fff; }
      </style>
      <div class="app"><slot name="app"></slot></div>
      <div><slot name="help"></slot></div>
      <div class="edge"></div>
      <div class="card"></div>
    `;
  }
}
customElements.define('cad-desktop', CadDesktop);
</script>
</body>
</html>
